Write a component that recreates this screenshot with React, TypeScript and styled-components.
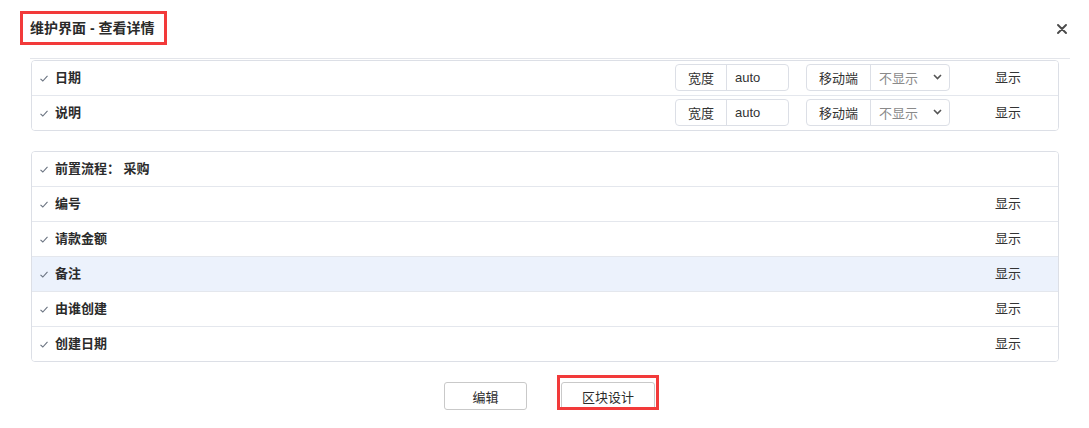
import React from 'react';
import styled, { createGlobalStyle, css } from 'styled-components';

const GlobalStyle = createGlobalStyle`
  html, body {
    margin: 0;
    padding: 0;
    background: #ffffff;
  }
  body {
    font-family: "Liberation Sans", "Noto Sans CJK SC", sans-serif;
    color: #333333;
  }
`;

const Modal = styled.div`
  width: 1089px;
  height: 428px;
  background: #ffffff;
  display: flex;
  flex-direction: column;
  overflow: hidden;
`;

const Header = styled.div`
  height: 58px;
  margin: 0 19px 0 30px;
  border-bottom: 1px solid #e3e5ea;
  display: flex;
  align-items: center;
  justify-content: space-between;
`;

const annotate = css`
  position: relative;
  &::after {
    content: '';
    position: absolute;
    border: 3px solid #f23a3a;
    pointer-events: none;
  }
`;

const Title = styled.h3`
  ${annotate}
  margin: 0 0 2px 0;
  font-size: 14px;
  font-weight: bold;
  color: #2b2b2b;
  line-height: 20px;
  &::after {
    top: -7px;
    bottom: -7px;
    left: -10px;
    right: -13px;
  }
`;

const CloseButton = styled.button`
  border: none;
  background: transparent;
  padding: 0;
  margin-right: 2px;
  width: 12px;
  height: 12px;
  display: flex;
  align-items: center;
  justify-content: center;
  cursor: pointer;
`;

const Body = styled.div`
  flex: 1;
  padding: 1px 30px 0 31px;
  display: flex;
  flex-direction: column;
  gap: 20px;
`;

const Panel = styled.div`
  border: 1px solid #dcdfe6;
  border-radius: 4px;
  overflow: hidden;
`;

const Row = styled.div<{ $active?: boolean }>`
  height: 34px;
  display: flex;
  align-items: center;
  padding: 0 5px 0 8px;
  background: ${p => (p.$active ? '#ecf2fc' : '#ffffff')};
  border-bottom: 1px solid #e4e7ed;
  &:last-child {
    border-bottom: none;
  }
`;

const Check = styled.span`
  width: 8px;
  height: 8px;
  display: flex;
  align-items: center;
  margin-right: 7px;
`;

const Label = styled.span`
  flex: 1;
  margin-bottom: 3px;
  font-size: 13px;
  font-weight: bold;
  color: #2b2b2b;
  white-space: nowrap;
`;

const Group = styled.div<{ $gapAfter: number }>`
  display: flex;
  height: 27px;
  margin-bottom: 2px;
  border: 1px solid #dcdfe6;
  border-radius: 4px;
  box-sizing: border-box;
  margin-right: ${p => p.$gapAfter}px;
  font-size: 13px;
  overflow: hidden;
`;

const Addon = styled.span<{ $width: number }>`
  width: ${p => p.$width}px;
  display: flex;
  align-items: center;
  justify-content: center;
  border-right: 1px solid #dcdfe6;
  color: #333333;
`;

const Field = styled.span<{ $width: number; $muted?: boolean }>`
  width: ${p => p.$width}px;
  display: flex;
  align-items: center;
  justify-content: space-between;
  padding: 0 7px 0 8px;
  box-sizing: border-box;
  color: ${p => (p.$muted ? '#8a8a8a' : '#333333')};
`;

const Display = styled.span`
  width: 90px;
  margin-bottom: 3px;
  text-align: center;
  font-size: 13px;
  color: #333333;
`;

const Footer = styled.div`
  height: 66px;
  display: flex;
  justify-content: center;
  align-items: flex-start;
  gap: 34px;
  padding: 20px 0 0 10px;
  box-sizing: border-box;
`;

const Button = styled.button<{ $marked?: boolean }>`
  height: 28px;
  min-width: 83px;
  padding: 0 20px;
  border: 1px solid #c9c9c9;
  border-radius: 3px;
  background: #ffffff;
  font-family: "Liberation Sans", "Noto Sans CJK SC", sans-serif;
  font-size: 13px;
  color: #2b2b2b;
  cursor: pointer;
  ${p =>
    p.$marked &&
    css`
      ${annotate}
      &::after {
        top: -8px;
        bottom: -1px;
        left: -5px;
        right: -5px;
      }
    `}
`;

const CheckIcon = () => (
  <svg width="8" height="7" viewBox="0 0 8 7">
    <polyline points="0.5,3.8 2.8,6 7.5,0.8" fill="none" stroke="#6a7380" strokeWidth="1.1" />
  </svg>
);

const Chevron = () => (
  <svg width="9" height="6" viewBox="0 0 9 6">
    <polyline points="1,1 4.5,4.5 8,1" fill="none" stroke="#555" strokeWidth="1.6" />
  </svg>
);

interface FieldRow {
  label: string;
  controls?: boolean;
  display?: boolean;
  active?: boolean;
}

const topRows: FieldRow[] = [
  { label: '日期', controls: true, display: true },
  { label: '说明', controls: true, display: true },
];

const flowRows: FieldRow[] = [
  { label: '前置流程： 采购' },
  { label: '编号', display: true },
  { label: '请款金额', display: true },
  { label: '备注', display: true, active: true },
  { label: '由谁创建', display: true },
  { label: '创建日期', display: true },
];

const renderRow = (row: FieldRow) => (
  <Row key={row.label} $active={row.active}>
    <Check>
      <CheckIcon />
    </Check>
    <Label>{row.label}</Label>
    {row.controls && (
      <>
        <Group $gapAfter={17}>
          <Addon $width={50}>宽度</Addon>
          <Field $width={61}>auto</Field>
        </Group>
        <Group $gapAfter={13}>
          <Addon $width={63}>移动端</Addon>
          <Field $width={78} $muted>
            不显示
            <Chevron />
          </Field>
        </Group>
      </>
    )}
    {row.display && <Display>显示</Display>}
  </Row>
);

export default function App() {
  return (
    <>
      <GlobalStyle />
      <Modal>
        <Header>
          <Title>维护界面 - 查看详情</Title>
          <CloseButton aria-label="close">
            <svg width="10" height="10" viewBox="0 0 10 10">
              <path d="M1 1L9 9M9 1L1 9" stroke="#4a4a4a" strokeWidth="1.9" strokeLinecap="round" />
            </svg>
          </CloseButton>
        </Header>
        <Body>
          <Panel>{topRows.map(renderRow)}</Panel>
          <Panel>{flowRows.map(renderRow)}</Panel>
        </Body>
        <Footer>
          <Button>编辑</Button>
          <Button $marked>区块设计</Button>
        </Footer>
      </Modal>
    </>
  );
}
